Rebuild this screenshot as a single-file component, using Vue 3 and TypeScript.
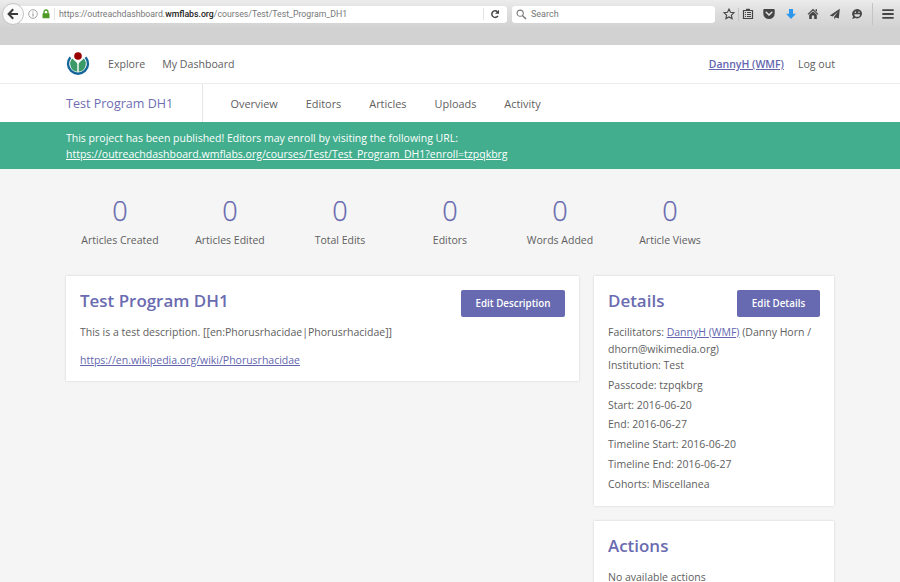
<script setup lang="ts">
interface Stat {
  label: string
  value: number
}

const tabs: string[] = ['Overview', 'Editors', 'Articles', 'Uploads', 'Activity']

const stats: Stat[] = [
  { label: 'Articles Created', value: 0 },
  { label: 'Articles Edited', value: 0 },
  { label: 'Total Edits', value: 0 },
  { label: 'Editors', value: 0 },
  { label: 'Words Added', value: 0 },
  { label: 'Article Views', value: 0 },
]

const details: string[] = [
  'Passcode: tzpqkbrg',
  'Start: 2016-06-20',
  'End: 2016-06-27',
  'Timeline Start: 2016-06-20',
  'Timeline End: 2016-06-27',
  'Cohorts: Miscellanea',
]
</script>

<template>
  <div class="window">
    <div class="chrome">
      <div class="toolbar">
        <span class="back">
          <svg width="12" height="12" viewBox="0 0 12 12">
            <path d="M6.2 1.2 1.6 6l4.6 4.8M2 6h9" fill="none" stroke="#3c3c3c" stroke-width="2" />
          </svg>
        </span>
        <div class="address">
          <svg class="info" width="10" height="10" viewBox="0 0 10 10">
            <circle cx="5" cy="5" r="4.3" fill="none" stroke="#8f8f8f" stroke-width=".8" />
            <path d="M5 4.3v3.2M5 2.4v1" stroke="#8f8f8f" stroke-width="1" />
          </svg>
          <svg class="lock" width="8" height="10" viewBox="0 0 8 10">
            <path d="M2 5V3a2 2 0 0 1 4 0v2" fill="none" stroke="#4f9a26" stroke-width="1.3" />
            <rect x=".5" y="4.3" width="7" height="5" rx=".6" fill="#4f9a26" />
          </svg>
          <i class="rule"></i>
          <span class="url">https://outreachdashboard.<b>wmflabs.org</b>/courses/Test/Test_Program_DH1</span>
          <i class="rule reload-rule"></i>
          <svg class="reload" width="10" height="10" viewBox="0 0 10 10">
            <path d="M7.9 6.9A3.3 3.3 0 1 1 7.4 2.7" fill="none" stroke="#444" stroke-width="1.5" />
            <path d="M9 .8v4H5z" fill="#444" />
          </svg>
        </div>
        <div class="search">
          <svg width="11" height="11" viewBox="0 0 11 11">
            <circle cx="4.2" cy="4.2" r="3.1" fill="none" stroke="#777" stroke-width="1.1" />
            <path d="m6.4 6.4 3.6 3.6" stroke="#777" stroke-width="1.4" />
          </svg>
          <span>Search</span>
        </div>
        <div class="tools">
          <svg width="12" height="12" viewBox="0 0 12 12">
            <path d="m6 1.1 1.5 3.2 3.5.4-2.6 2.4.7 3.5L6 8.9l-3.1 1.7.7-3.5L1 4.7l3.5-.4z" fill="none" stroke="#454545" stroke-width="1.1" />
          </svg>
          <i class="divider"></i>
          <svg width="12" height="12" viewBox="0 0 12 12">
            <path d="M1.5 2.5h9v8h-9z" fill="none" stroke="#454545" stroke-width="1.2" />
            <path d="M4 .8h4v2.2H4z" fill="#454545" />
            <path d="M3 4.5h1M5 4.5h4M3 6.5h1M5 6.5h4M3 8.5h1M5 8.5h4" stroke="#454545" stroke-width="1" />
          </svg>
          <svg class="pocket" width="12" height="12" viewBox="0 0 12 12">
            <path d="M1.3 1h9.4q1 0 1 1v3.4a5.7 5.7 0 0 1-11.4 0V2q0-1 1-1z" fill="#454545" />
            <path d="m3.2 4.3 2.8 2.7 2.8-2.7" fill="none" stroke="#e4e4e4" stroke-width="1.5" stroke-linecap="round" />
          </svg>
          <svg class="download" width="12" height="12" viewBox="0 0 12 12">
            <path d="M4 1h4v4.7h3L6 11 1 5.7h3z" fill="#2d97ee" />
          </svg>
          <svg class="home" width="12" height="12" viewBox="0 0 12 12">
            <path d="M6 .8 11.4 6l-.7.8L6 2.5 1.3 6.8.6 6zM8.5 1.2H10v2.5L8.5 2.4zM6 3.4l3.8 3.4V11H7.2V7.600H4.800V11H2.200V6.800z" fill="#454545" />
          </svg>
          <svg class="send" width="12" height="12" viewBox="0 0 12 12">
            <path d="M10.8.8.8 7.400l3 1L9 3.500 5.200 8.700v2.500l1.600-1.800 3 1z" fill="#454545" />
          </svg>
          <svg class="smile" width="12" height="12" viewBox="0 0 12 12">
            <path d="M6.200 1a5 4.700 0 1 1-2 9.100L1.200 11l.9-2.500A4.900 4.700 0 0 1 6.200 1z" fill="#454545" />
            <circle cx="4.400" cy="4.300" r=".8" fill="#ddd" />
            <circle cx="8" cy="4.300" r=".8" fill="#ddd" />
            <path d="M3.400 6.200h5.600a2.800 2.600 0 0 1-5.600 0z" fill="#ddd" />
          </svg>
          <i class="divider tall"></i>
          <svg class="menu" width="12" height="12" viewBox="0 0 12 12">
            <path d="M1 2.200h10M1 6h10M1 9.800h10" stroke="#454545" stroke-width="1.800" stroke-linecap="round" />
          </svg>
        </div>
      </div>
    </div>

    <header class="site-header">
      <svg class="logo" width="24" height="24" viewBox="0 0 24 24">
        <path d="M4.400 5.200A10 10 0 1 0 19.600 5.200" fill="none" stroke="#14659a" stroke-width="2.400" />
        <path d="M6.300 6.600a7.800 7.800 0 0 0 5 13.100V12.400q0-1-.8-1.800z" fill="#3a9a68" />
        <path d="M17.700 6.600a7.800 7.800 0 0 1-5 13.100V12.400q0-1 .8-1.800z" fill="#3a9a68" />
        <circle cx="12" cy="4" r="3.800" fill="#990000" />
      </svg>
      <a class="explore">Explore</a>
      <a class="dashboard">My Dashboard</a>
      <a class="account">DannyH (WMF)</a>
      <a class="logout">Log out</a>
    </header>

    <nav class="course-nav">
      <h2>Test Program DH1</h2>
      <div class="tabs">
        <a v-for="tab in tabs" :key="tab">{{ tab }}</a>
      </div>
    </nav>

    <div class="notice">
      <p>This project has been published! Editors may enroll by visiting the following URL:</p>
      <p><a>https://outreachdashboard.wmflabs.org/courses/Test/Test_Program_DH1?enroll=tzpqkbrg</a></p>
    </div>

    <section class="stats">
      <div v-for="stat in stats" :key="stat.label" class="stat">
        <div class="value">{{ stat.value }}</div>
        <div class="label">{{ stat.label }}</div>
      </div>
    </section>

    <main class="content">
      <section class="card description">
        <div class="card-head">
          <h3>Test Program DH1</h3>
          <button class="edit-description">Edit Description</button>
        </div>
        <p>This is a test description. [[en:Phorusrhacidae|Phorusrhacidae]]</p>
        <p class="wiki"><a>https://en.wikipedia.org/wiki/Phorusrhacidae</a></p>
      </section>
      <aside class="side">
        <section class="card details">
          <div class="card-head">
            <h3>Details</h3>
            <button class="edit-details">Edit Details</button>
          </div>
          <p class="facilitators">Facilitators: <a>DannyH (WMF)</a> (Danny Horn /<br />dhorn@wikimedia.org)</p>
          <p class="institution">Institution: Test</p>
          <p v-for="line in details" :key="line" class="detail">{{ line }}</p>
        </section>
        <section class="card actions">
          <div class="card-head">
            <h3>Actions</h3>
          </div>
          <p class="empty">No available actions</p>
        </section>
      </aside>
    </main>
  </div>
</template>

<style>
body {
  margin: 0;
  overflow: hidden;
}
</style>

<style scoped>
* {
  box-sizing: border-box;
}
.window {
  width: 900px;
  height: 582px;
  overflow: hidden;
  background: #f5f5f5;
  color: #606060;
  font: 10.5px/16px 'Open Sans', sans-serif;
}
p, h2, h3 {
  margin: 0;
}
svg, .rule, .divider {
  display: block;
  flex: none;
}
.chrome {
  height: 45px;
  background: linear-gradient(#ececec 0, #dedede 12px, #d2d2d2 28px, #d2d2d2 100%);
  border-bottom: 1px solid #d0d0d0;
}
.toolbar {
  display: flex;
  align-items: center;
  height: 28px;
  padding-left: 2px;
  font-family: Roboto, sans-serif;
  font-size: 9px;
}
.back {
  display: flex;
  align-items: center;
  justify-content: center;
  flex: none;
  width: 22px;
  height: 22px;
  border: 1px solid #c4c4c4;
  border-radius: 50%;
  background: #fafafa;
  z-index: 1;
}
.address {
  display: flex;
  align-items: center;
  width: 487px;
  height: 17px;
  margin-left: -4px;
  padding-left: 8px;
  border-radius: 0 3px 3px 0;
  background: #fff;
}
.lock {
  margin-left: 4px;
}
.rule {
  width: 1px;
  height: 12px;
  margin-left: 4px;
  background: #e3e3e3;
}
.url {
  width: 424px;
  margin-left: 4px;
  color: #777;
  font-size: 8.72px;
  white-space: nowrap;
}
.url b {
  color: #222;
  font-weight: 500;
}
.reload-rule {
  margin-left: 0;
}
.reload {
  margin-left: 6px;
}
.search {
  display: flex;
  align-items: center;
  width: 203px;
  height: 17px;
  margin-left: 5px;
  padding-left: 4px;
  gap: 4px;
  border-radius: 3px;
  background: #fff;
  color: #777;
}
.tools {
  display: flex;
  align-items: center;
  margin-left: 7.5px;
}
.divider {
  width: 1px;
  height: 13px;
  margin: 0 3px 0 3px;
  background: #c4c4c4;
}
.pocket {
  margin-left: 9px;
}
.download, .home, .send, .smile {
  margin-left: 10.2px;
}
.divider.tall {
  height: 22px;
  margin: 0 9px 0 9px;
}
.site-header {
  display: flex;
  align-items: center;
  height: 39px;
  padding: 0 65px 0 66px;
  background: #fff;
  border-bottom: 1px solid #ececec;
  font-size: 10.6px;
}
.explore {
  margin-left: 18px;
}
.dashboard {
  margin-left: 17px;
}
.account {
  margin-left: auto;
  font-size: 10.5px;
  font-weight: 600;
}
.logout {
  margin-left: 14px;
}
a {
  white-space: nowrap;
}
.account, .card a {
  color: #6366ae;
  text-decoration: underline;
}
.course-nav {
  display: flex;
  height: 38px;
  padding-left: 66px;
  background: #fff;
}
h2 {
  width: 137px;
  border-right: 1px solid #e6e6e6;
  color: #6f6db2;
  font-size: 12.55px;
  font-weight: 400;
  line-height: 40px;
  white-space: nowrap;
}
.tabs {
  display: flex;
  gap: 28px;
  padding-left: 27.5px;
  font-size: 10.9px;
  line-height: 40px;
}
.notice {
  height: 47px;
  padding: 8px 66px 0;
  background: #42ae8e;
  color: #fff;
}
.notice a {
  text-decoration: underline;
}
.stats {
  display: flex;
  height: 107px;
  padding: 24px 0 0 65px;
}
.stat {
  width: 110px;
  text-align: center;
}
.value {
  height: 36px;
  color: #6467ad;
  font-size: 27px;
  font-weight: 300;
  line-height: 36px;
  -webkit-text-stroke: .25px #6467ad;
}
.label {
  margin-top: 3px;
}
.content {
  display: flex;
  align-items: flex-start;
  gap: 15px;
  padding-left: 66px;
}
.card {
  padding: 14px;
  background: #fff;
  box-shadow: 0 0 2px rgba(0, 0, 0, .16);
}
.description {
  width: 513px;
  height: 105px;
}
.side {
  display: flex;
  flex-direction: column;
  gap: 15px;
  width: 240px;
}
.details {
  height: 230px;
}
.actions {
  height: 70px;
  padding-bottom: 0;
}
.card-head {
  display: flex;
  justify-content: space-between;
  height: 34px;
}
h3 {
  color: #6a6bb0;
  font-size: 16.95px;
  font-weight: 600;
  line-height: 22px;
  white-space: nowrap;
}
button {
  height: 27px;
  padding: 0;
  border: 0;
  border-radius: 2px;
  background: #676ab0;
  color: #fff;
  font: 600 9.8px/27px 'Open Sans', sans-serif;
  white-space: nowrap;
}
.edit-description {
  width: 104px;
}
.edit-details {
  width: 83px;
}
.wiki {
  margin-top: 12px;
}
.facilitators {
  height: 33px;
  line-height: 17px;
  white-space: nowrap;
}
.detail {
  margin-top: 3.8px;
}
.empty {
  line-height: 16px;
}
</style>
